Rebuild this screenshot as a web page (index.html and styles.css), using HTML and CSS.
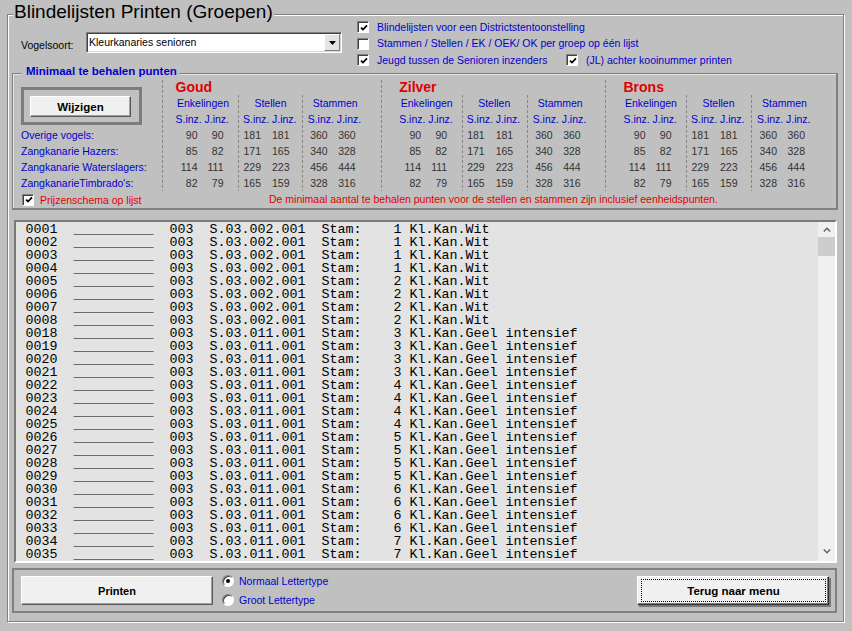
FILE: index.html
```html
<!DOCTYPE html>
<html>
<head>
<meta charset="utf-8">
<title>Blindelijsten Printen (Groepen)</title>
<link rel="stylesheet" href="styles.css">
</head>
<body>
<div class="frame">
  <div class="frame-title">Blindelijsten Printen (Groepen)</div>
  <div class="top">
    <div class="vogel">
      <span class="vogel-label">Vogelsoort:</span>
      <div class="select">
        <span class="select-text">Kleurkanaries senioren</span>
        <span class="select-btn"><svg width="7" height="4" viewBox="0 0 7 4"><polygon points="0,0 7,0 3.5,4" fill="#000"/></svg></span>
      </div>
    </div>
    <div class="checks">
      <div class="chk-row">
        <span class="cb"><svg width="8" height="8" viewBox="0 0 8 8"><path d="M1 3.6 L3 5.6 L7 1.4" fill="none" stroke="#000" stroke-width="1.7"/></svg></span>
        <span class="lbl">Blindelijsten voor een Districtstentoonstelling</span>
      </div>
      <div class="chk-row">
        <span class="cb"></span>
        <span class="lbl">Stammen / Stellen / EK / OEK/ OK per groep op één lijst</span>
      </div>
      <div class="chk-row">
        <div class="chk-item wide">
          <span class="cb"><svg width="8" height="8" viewBox="0 0 8 8"><path d="M1 3.6 L3 5.6 L7 1.4" fill="none" stroke="#000" stroke-width="1.7"/></svg></span>
          <span class="lbl">Jeugd tussen de Senioren inzenders</span>
        </div>
        <div class="chk-item">
          <span class="cb"><svg width="8" height="8" viewBox="0 0 8 8"><path d="M1 3.6 L3 5.6 L7 1.4" fill="none" stroke="#000" stroke-width="1.7"/></svg></span>
          <span class="lbl">(JL) achter kooinummer printen</span>
        </div>
      </div>
    </div>
  </div>

  <div class="group">
    <div class="group-title">Minimaal te behalen punten</div>
    <div class="mgrid">
      <div class="mleft">
        <div class="wij-frame"><div class="btn wij">Wijzigen</div></div>
        <div class="rlabel">Overige vogels:</div>
        <div class="rlabel">Zangkanarie Hazers:</div>
        <div class="rlabel">Zangkanarie Waterslagers:</div>
        <div class="rlabel">ZangkanarieTimbrado's:</div>
      </div>

      <div class="medal goud">
        <div class="mtitle">Goud</div>
        <div class="subs">
          <div class="sub sub-e">
            <div class="hdr">Enkelingen</div><div class="si">S.inz.</div><div class="si">J.inz.</div>
            <div class="v v1">90</div><div class="v v2">90</div>
            <div class="v v1">85</div><div class="v v2">82</div>
            <div class="v v1">114</div><div class="v v2">111</div>
            <div class="v v1">82</div><div class="v v2">79</div>
          </div>
          <div class="sub sub-s">
            <div class="hdr">Stellen</div><div class="si">S.inz.</div><div class="si">J.inz.</div>
            <div class="v v1">181</div><div class="v v2">181</div>
            <div class="v v1">171</div><div class="v v2">165</div>
            <div class="v v1">229</div><div class="v v2">223</div>
            <div class="v v1">165</div><div class="v v2">159</div>
          </div>
          <div class="sub sub-t">
            <div class="hdr">Stammen</div><div class="si">S.inz.</div><div class="si">J.inz.</div>
            <div class="v v1">360</div><div class="v v2">360</div>
            <div class="v v1">340</div><div class="v v2">328</div>
            <div class="v v1">456</div><div class="v v2">444</div>
            <div class="v v1">328</div><div class="v v2">316</div>
          </div>
        </div>
      </div>

      <div class="medal">
        <div class="mtitle">Zilver</div>
        <div class="subs">
          <div class="sub sub-e">
            <div class="hdr">Enkelingen</div><div class="si">S.inz.</div><div class="si">J.inz.</div>
            <div class="v v1">90</div><div class="v v2">90</div>
            <div class="v v1">85</div><div class="v v2">82</div>
            <div class="v v1">114</div><div class="v v2">111</div>
            <div class="v v1">82</div><div class="v v2">79</div>
          </div>
          <div class="sub sub-s">
            <div class="hdr">Stellen</div><div class="si">S.inz.</div><div class="si">J.inz.</div>
            <div class="v v1">181</div><div class="v v2">181</div>
            <div class="v v1">171</div><div class="v v2">165</div>
            <div class="v v1">229</div><div class="v v2">223</div>
            <div class="v v1">165</div><div class="v v2">159</div>
          </div>
          <div class="sub sub-t">
            <div class="hdr">Stammen</div><div class="si">S.inz.</div><div class="si">J.inz.</div>
            <div class="v v1">360</div><div class="v v2">360</div>
            <div class="v v1">340</div><div class="v v2">328</div>
            <div class="v v1">456</div><div class="v v2">444</div>
            <div class="v v1">328</div><div class="v v2">316</div>
          </div>
        </div>
      </div>

      <div class="medal">
        <div class="mtitle">Brons</div>
        <div class="subs">
          <div class="sub sub-e">
            <div class="hdr">Enkelingen</div><div class="si">S.inz.</div><div class="si">J.inz.</div>
            <div class="v v1">90</div><div class="v v2">90</div>
            <div class="v v1">85</div><div class="v v2">82</div>
            <div class="v v1">114</div><div class="v v2">111</div>
            <div class="v v1">82</div><div class="v v2">79</div>
          </div>
          <div class="sub sub-s">
            <div class="hdr">Stellen</div><div class="si">S.inz.</div><div class="si">J.inz.</div>
            <div class="v v1">181</div><div class="v v2">181</div>
            <div class="v v1">171</div><div class="v v2">165</div>
            <div class="v v1">229</div><div class="v v2">223</div>
            <div class="v v1">165</div><div class="v v2">159</div>
          </div>
          <div class="sub sub-t">
            <div class="hdr">Stammen</div><div class="si">S.inz.</div><div class="si">J.inz.</div>
            <div class="v v1">360</div><div class="v v2">360</div>
            <div class="v v1">340</div><div class="v v2">328</div>
            <div class="v v1">456</div><div class="v v2">444</div>
            <div class="v v1">328</div><div class="v v2">316</div>
          </div>
        </div>
      </div>

      <div class="prijs">
        <span class="cb"><svg width="8" height="8" viewBox="0 0 8 8"><path d="M1 3.6 L3 5.6 L7 1.4" fill="none" stroke="#000" stroke-width="1.7"/></svg></span>
        <span>Prijzenschema op lijst</span>
      </div>
      <div class="note">De minimaal aantal te behalen punten voor de stellen en stammen zijn inclusief eenheidspunten.</div>
    </div>
  </div>

  <div class="list">
<pre class="listtext">0001  __________  003  S.03.002.001  Stam:    1 Kl.Kan.Wit
0002  __________  003  S.03.002.001  Stam:    1 Kl.Kan.Wit
0003  __________  003  S.03.002.001  Stam:    1 Kl.Kan.Wit
0004  __________  003  S.03.002.001  Stam:    1 Kl.Kan.Wit
0005  __________  003  S.03.002.001  Stam:    2 Kl.Kan.Wit
0006  __________  003  S.03.002.001  Stam:    2 Kl.Kan.Wit
0007  __________  003  S.03.002.001  Stam:    2 Kl.Kan.Wit
0008  __________  003  S.03.002.001  Stam:    2 Kl.Kan.Wit
0018  __________  003  S.03.011.001  Stam:    3 Kl.Kan.Geel intensief
0019  __________  003  S.03.011.001  Stam:    3 Kl.Kan.Geel intensief
0020  __________  003  S.03.011.001  Stam:    3 Kl.Kan.Geel intensief
0021  __________  003  S.03.011.001  Stam:    3 Kl.Kan.Geel intensief
0022  __________  003  S.03.011.001  Stam:    4 Kl.Kan.Geel intensief
0023  __________  003  S.03.011.001  Stam:    4 Kl.Kan.Geel intensief
0024  __________  003  S.03.011.001  Stam:    4 Kl.Kan.Geel intensief
0025  __________  003  S.03.011.001  Stam:    4 Kl.Kan.Geel intensief
0026  __________  003  S.03.011.001  Stam:    5 Kl.Kan.Geel intensief
0027  __________  003  S.03.011.001  Stam:    5 Kl.Kan.Geel intensief
0028  __________  003  S.03.011.001  Stam:    5 Kl.Kan.Geel intensief
0029  __________  003  S.03.011.001  Stam:    5 Kl.Kan.Geel intensief
0030  __________  003  S.03.011.001  Stam:    6 Kl.Kan.Geel intensief
0031  __________  003  S.03.011.001  Stam:    6 Kl.Kan.Geel intensief
0032  __________  003  S.03.011.001  Stam:    6 Kl.Kan.Geel intensief
0033  __________  003  S.03.011.001  Stam:    6 Kl.Kan.Geel intensief
0034  __________  003  S.03.011.001  Stam:    7 Kl.Kan.Geel intensief
0035  __________  003  S.03.011.001  Stam:    7 Kl.Kan.Geel intensief</pre>
    <div class="sbar">
      <div class="sbtn up"><svg width="8" height="5" viewBox="0 0 8 5"><path d="M0.8 4.4 L4 1.2 L7.2 4.4" fill="none" stroke="#606060" stroke-width="1.4"/></svg></div>
      <div class="sthumb"></div>
      <div class="strack"></div>
      <div class="sbtn down"><svg width="8" height="5" viewBox="0 0 8 5"><path d="M0.8 0.6 L4 3.8 L7.2 0.6" fill="none" stroke="#606060" stroke-width="1.4"/></svg></div>
    </div>
  </div>

  <div class="bottom">
    <div class="btn print">Printen</div>
    <div class="radios">
      <div class="radio-row"><span class="rb on"></span><span>Normaal Lettertype</span></div>
      <div class="radio-row"><span class="rb"></span><span>Groot Lettertype</span></div>
    </div>
    <div class="btn terug"><span class="focus">Terug naar menu</span></div>
  </div>
</div>
</body>
</html>
```

FILE: styles.css
```css
* { box-sizing: border-box; }
html, body { margin: 0; padding: 0; }
body {
  width: 852px;
  height: 631px;
  overflow: hidden;
  background: #c0c0c0;
  font-family: "Liberation Sans", Arial, sans-serif;
  font-size: 10.5px;
  color: #000;
}

/* outer group box */
.frame {
  margin: 14px 8px 0 7px;
  height: 608px;
  border: 1px solid #808080;
  box-shadow: inset 1px 1px 0 #fff, 1px 1px 0 #fff;
}
.frame-title {
  width: max-content;
  height: 22px;
  margin: -13.6px 0 -8.4px 5px;
  padding: 0 1px;
  font-size: 19px;
  line-height: 22px;
  background: #c0c0c0;
}

/* top row */
.top {
  display: flex;
  align-items: flex-start;
  height: 53.25px;
}
.vogel {
  display: flex;
  align-items: flex-end;
  margin: 17px 0 0 13px;
}
.vogel-label {
  width: 65px;
  line-height: 16px;
}
.select {
  display: flex;
  width: 256px;
  height: 21px;
  padding: 1px;
  background: #fff;
  border: 1px solid;
  border-color: #808080 #fff #fff #808080;
  box-shadow: inset 1px 1px 0 #404040, inset -1px -1px 0 #d8d8d8;
}
.select-text {
  flex: 1;
  padding-left: 1px;
  line-height: 17px;
}
.select-btn {
  width: 16px;
  height: 17px;
  display: flex;
  align-items: center;
  justify-content: center;
  background: #e4e4e4;
  border: 1px solid;
  border-color: #fff #808080 #808080 #fff;
}
.select-btn svg { display: block; }

.checks {
  margin: 3.75px 0 0 15px;
  color: #0000cc;
}
.chk-row {
  display: flex;
  align-items: center;
  height: 16.5px;
  line-height: 16.5px;
}
.chk-item {
  display: flex;
  align-items: center;
}
.chk-item.wide { width: 209px; }

.cb {
  width: 12px;
  height: 12px;
  flex: none;
  margin-right: 8px;
  display: flex;
  align-items: center;
  justify-content: center;
  background: #fff;
  border: 1px solid;
  border-color: #808080 #fff #fff #808080;
  box-shadow: inset 1px 1px 0 #404040;
}
.cb svg { display: block; margin: 1px 0 0 1px; }

/* Minimaal group */
.group {
  margin: 4.75px 5px 0 4px;
  height: 137px;
  border-style: solid;
  border-color: #808080;
  border-width: 1px 2px 2px 1px;
  box-shadow: inset 1px 1px 0 #e4e4e4;
}
.group-title {
  width: max-content;
  height: 14px;
  margin: -10.5px 0 2.5px 9px;
  padding: 0 2px 0 4px;
  font-weight: bold;
  font-size: 11.5px;
  line-height: 14px;
  color: #0000cc;
  background: #c0c0c0;
}
.mgrid {
  display: grid;
  grid-template-columns: 149px 218.7px 224.3px 1fr;
  grid-template-rows: 111px 17px;
}
.mleft { padding-left: 8px; }
.wij-frame {
  width: 121px;
  height: 38px;
  margin-top: 7px;
  padding: 6px 8px 5px 6px;
  border: 3px solid #7c7c7c;
}
.btn {
  display: flex;
  align-items: center;
  justify-content: center;
  background: #f0f0f0;
  border: 1px solid;
  border-color: #fff #5a5a5a #5a5a5a #fff;
  box-shadow: inset -1px -1px 0 #a0a0a0;
  font-weight: bold;
  font-size: 11.5px;
  color: #000;
}
.wij { width: 101px; height: 21px; }
.rlabel {
  line-height: 16px;
  color: #0000cc;
  white-space: nowrap;
}
.wij-frame + .rlabel { margin-top: 2px; }

.medal,
.sub-s,
.sub-t {
  background-image: linear-gradient(#858585 60%, transparent 60%);
  background-size: 1px 5px;
  background-repeat: repeat-y;
  background-position: 0 0;
}
.medal { padding-left: 18.5px; }
.medal.goud { padding-left: 13.5px; }
.mtitle {
  font-size: 14px;
  font-weight: bold;
  line-height: 15px;
  color: #e00000;
}
.subs { display: flex; }
.sub {
  display: grid;
  grid-template-columns: 26px 26px;
  column-gap: 3px;
  grid-auto-rows: 16px;
  line-height: 16px;
  align-content: start;
}
.sub-e { width: 62.5px; }
.sub-s { width: 65px; padding-left: 5px; }
.goud .sub-s { width: 63.7px; }
.sub-t { flex: 1; padding-left: 6px; }
.hdr {
  grid-column: 1 / 3;
  text-align: center;
  color: #0000cc;
  white-space: nowrap;
}
.si { color: #0000cc; white-space: nowrap; }
.v { text-align: right; color: #333; }
.sub-e .v1 { padding-right: 4px; }
.sub-e .v2 { padding-right: 7px; }
.sub-s .v1 { padding-right: 8px; }
.sub-s .v2 { padding-right: 11px; }
.sub-t .v1 { padding-right: 6px; }
.sub-t .v2 { padding-right: 7px; }

.prijs {
  display: flex;
  align-items: center;
  padding-left: 9px;
  color: #e00000;
  white-space: nowrap;
}
.prijs .cb { margin-right: 6px; }
.note {
  grid-column: 2 / 5;
  padding-left: 107px;
  line-height: 17px;
  color: #e00000;
  white-space: nowrap;
}

/* list */
.list {
  display: flex;
  margin: 10px 6px 0 6px;
  height: 343px;
  border: 2px solid;
  border-color: #7a7a7a #fff #fff #7a7a7a;
  background: #e3e3e3;
}
.listtext {
  flex: 1;
  margin: 0;
  padding: 0.5px 0 0 9.5px;
  font-family: "Liberation Mono", "Courier New", monospace;
  font-size: 13.333px;
  line-height: 13px;
  color: #000;
  white-space: pre;
  overflow: hidden;
}
.sbar {
  width: 17px;
  flex: none;
  display: flex;
  flex-direction: column;
  background: #f0f0f0;
}
.sbtn {
  display: flex;
  align-items: center;
  justify-content: center;
}
.sbtn svg { display: block; }
.sbtn.up { height: 15px; }
.sbtn.down { height: 17px; padding-bottom: 3px; }
.sthumb { height: 19px; background: #cdcdcd; }
.strack { flex: 1; }

/* bottom */
.bottom {
  display: flex;
  align-items: flex-start;
  margin: 5px 6px 0 4px;
  height: 45px;
  padding: 0 6px 0 7px;
  border: 2px solid #808080;
}
.print {
  width: 192px;
  height: 29px;
  margin-top: 6px;
  font-size: 11px;
}
.radios {
  margin: 1.5px 0 0 9px;
  color: #0000cc;
}
.radio-row {
  display: flex;
  align-items: center;
  height: 19px;
}
.rb {
  width: 12px;
  height: 12px;
  margin-right: 5px;
  display: flex;
  align-items: center;
  justify-content: center;
  border-radius: 50%;
  background: #fff;
  border: 1px solid;
  border-color: #808080 #fff #fff #808080;
  box-shadow: inset 1px 1px 0 #404040;
}
.rb.on::after {
  content: "";
  width: 4px;
  height: 4px;
  border-radius: 50%;
  background: #000;
}
.terug {
  width: 192px;
  height: 29px;
  margin: 6px 0 0 auto;
  padding: 2px 2px 2px 3px;
  align-items: stretch;
  border-color: #fff #303030 #303030 #fff;
  box-shadow: inset -1px -1px 0 #808080, 2px 2px 0 #7a7a7a;
}
.focus {
  flex: 1;
  display: flex;
  align-items: center;
  justify-content: center;
  border: 1px dotted #000;
}
```
